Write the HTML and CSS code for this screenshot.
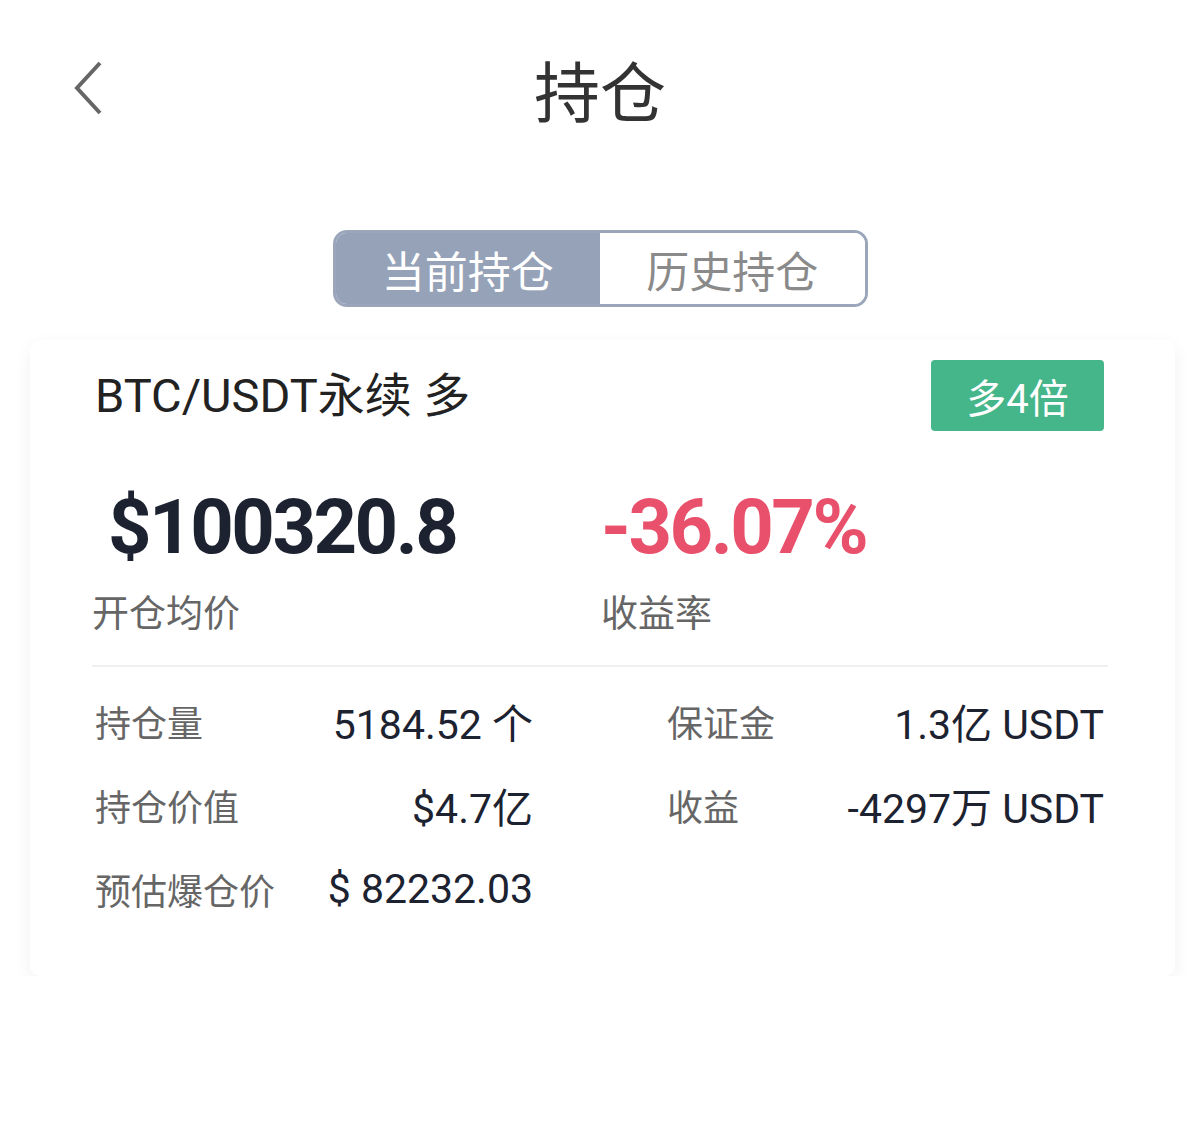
FILE: index.html
```html
<!DOCTYPE html>
<html lang="zh-CN">
<head>
    <meta charset="UTF-8">
    <meta name="viewport" content="width=device-width, initial-scale=1.0">
    <title>持仓</title>
    <link rel="stylesheet" href="styles.css">
</head>
<body>
    <header class="topbar">
        <a class="back" href="#">
            <svg width="30" height="56" viewBox="0 0 30 56">
                <polyline points="26,3 3,28 26,53" fill="none" stroke="#666" stroke-width="4"/>
            </svg>
        </a>
        <h1 class="title">持仓</h1>
        <span></span>
    </header>

    <div class="tabs">
        <div class="tab active">当前持仓</div>
        <div class="tab">历史持仓</div>
    </div>

    <div class="card">
        <div class="card-head">
            <span class="pair">BTC/USDT永续 多</span>
            <span class="badge">多4倍</span>
        </div>

        <div class="stats">
            <div class="stat">
                <div class="big price">$100320.8</div>
                <div class="stat-label">开仓均价</div>
            </div>
            <div class="stat">
                <div class="big loss">-36.07%</div>
                <div class="stat-label">收益率</div>
            </div>
        </div>

        <div class="details">
            <div class="item"><span class="label">持仓量</span><span class="value">5184.52 个</span></div>
            <div class="item"><span class="label">保证金</span><span class="value">1.3亿 USDT</span></div>
            <div class="item"><span class="label">持仓价值</span><span class="value">$4.7亿</span></div>
            <div class="item"><span class="label">收益</span><span class="value">-4297万 USDT</span></div>
            <div class="item"><span class="label">预估爆仓价</span><span class="value">$ 82232.03</span></div>
        </div>
    </div>
</body>
</html>
```

FILE: styles.css
```css
body {
    margin: 0;
    background: #fff;
    font-family: "Roboto", "Noto Sans CJK SC", sans-serif;
    color: #222;
}
.topbar {
    height: 176px;
    display: grid;
    grid-template-columns: 1fr auto 1fr;
    align-items: center;
    padding: 0 74px;
}
.back {
    display: flex;
    align-items: center;
}
.title {
    margin: 0;
    font-size: 66px;
    font-weight: 400;
    color: #333;
}
.tabs {
    width: 529px;
    height: 71px;
    margin: 54px auto 0;
    display: flex;
    border: 3px solid #9ba6ba;
    border-radius: 14px;
    overflow: hidden;
}
.tab {
    flex: 1;
    display: flex;
    align-items: center;
    justify-content: center;
    font-size: 43px;
    color: #8a8a8a;
    background: #fff;
}
.tab.active {
    background: #95a2b8;
    color: #fff;
}
.card {
    margin: 33px 25px 0 30px;
    padding: 20px 67px 62px 62px;
    background: #fff;
    border-radius: 10px;
    box-shadow: 0 6px 18px rgba(0, 0, 0, 0.06);
}
.card-head {
    display: flex;
    justify-content: space-between;
    align-items: center;
}
.pair {
    font-size: 47px;
    line-height: 60px;
    color: #222;
    padding-left: 3px;
}
.badge {
    width: 173px;
    height: 71px;
    margin-right: 4px;
    display: flex;
    align-items: center;
    justify-content: center;
    background: #45b58a;
    color: #fff;
    font-size: 40px;
    border-radius: 4px;
}
.stats {
    display: grid;
    grid-template-columns: 509px 1fr;
    margin-top: 56px;
    padding-bottom: 28px;
    border-bottom: 2px solid #f0f0f0;
}
.big {
    font-size: 76px;
    line-height: 80px;
    font-weight: 700;
    letter-spacing: -2.5px;
}
.price {
    color: #1c2230;
    padding-left: 16px;
}
.loss {
    color: #e9506c;
}
.stat-label {
    margin-top: 26px;
    font-size: 37px;
    line-height: 44px;
    color: #666;
}
.details {
    display: grid;
    grid-template-columns: 441px 1fr;
    column-gap: 131px;
    row-gap: 34px;
    padding: 29px 4px 0 0;
}
.item {
    display: flex;
    justify-content: space-between;
    align-items: center;
    height: 50px;
}
.label {
    font-size: 36px;
    color: #666;
    padding-left: 3px;
}
.value {
    font-size: 41px;
    color: #1c2230;
}
```
